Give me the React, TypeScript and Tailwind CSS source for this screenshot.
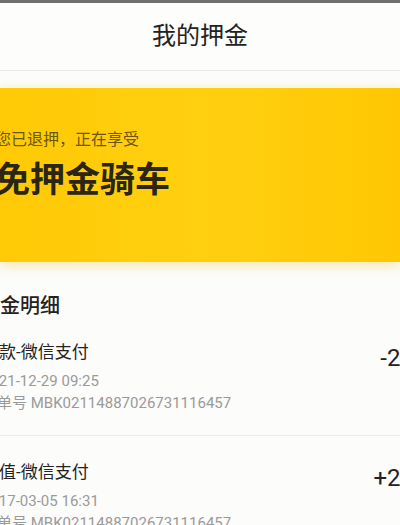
import React from "react";

const FONT = { fontFamily: 'Roboto, "Noto Sans CJK SC", "Noto Sans", sans-serif' };

function Row({ title, date, order, sign, amount, divider }: { title: string; date: string; order: string; sign: string; amount: string; divider?: boolean }) {
  return (
    <div className={`flex pb-[22px] ${divider ? "pt-[24px] border-t border-[#ebebea]" : "pt-[22px]"}`}>
      <div className="w-[381px] shrink-0 flex flex-col">
        <div className="text-[17px] leading-[24px] text-[#222] whitespace-nowrap">{title}</div>
        <div className="mt-[7px] text-[15px] leading-[20px] text-[#9a9a9a] whitespace-nowrap">{date}</div>
        <div className="mt-[2px] text-[15px] leading-[20px] text-[#9a9a9a] whitespace-nowrap">{order}</div>
      </div>
      <div className="flex shrink-0 self-start mt-[3px] text-[24px] leading-[30px] text-[#222] whitespace-nowrap">
        <span className="w-[24px] text-right">{sign}</span>
        <span>{amount}</span>
      </div>
    </div>
  );
}

export default function App() {
  return (
    <div className="w-[400px] h-[525px] overflow-hidden bg-[#fcfcfa]" style={FONT}>
      <div className="h-[3px] bg-[#6f6f6f]" />
      <header className="h-[68px] flex items-center justify-center border-b border-[#e7e7e5] bg-[#fdfdfb]">
        <span className="text-[24px] leading-[30px] text-[#222] -mt-[2px]">我的押金</span>
      </header>
      <div className="pt-[17px]">
        <div className="h-[174px] bg-gradient-to-r from-[#ffc905] via-[#ffd010] to-[#ffc703] shadow-[0_3px_12px_rgba(235,190,0,0.35)] pt-[41px]">
          <div className="-ml-[5px] flex flex-col whitespace-nowrap">
            <div className="text-[16px] leading-[22px] text-[#6b5612]">您已退押，正在享受</div>
            <div className="mt-[10px] text-[35px] leading-[40px] font-bold text-[#2a2515]">免押金骑车</div>
          </div>
        </div>
      </div>
      <div className="-ml-[18px] w-[480px] pt-[33px]">
        <div className="-ml-[2px] text-[20px] leading-[23px] text-[#222] font-medium whitespace-nowrap">押金明细</div>
        <Row title="退款-微信支付" date="2021-12-29 09:25" order="订单号 MBK02114887026731116457" sign="-" amount="299.00" />
        <Row title="充值-微信支付" date="2017-03-05 16:31" order="订单号 MBK02114887026731116457" sign="+" amount="299.00" divider />
      </div>
    </div>
  );
}
